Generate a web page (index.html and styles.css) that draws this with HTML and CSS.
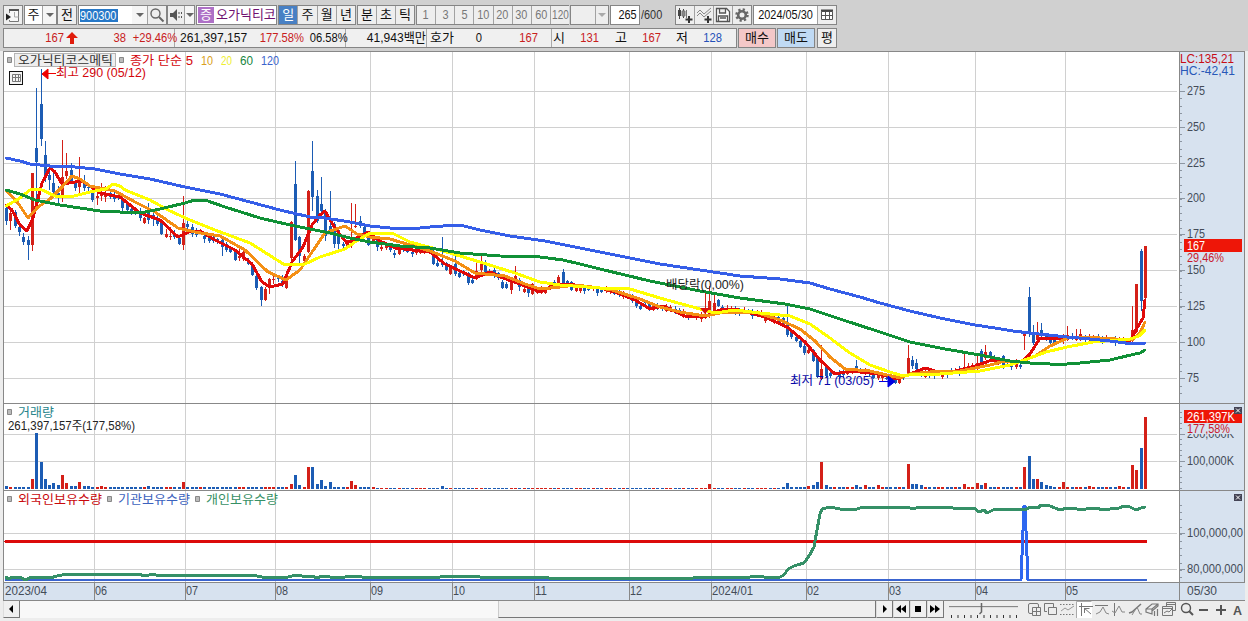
FILE: index.html
```html
<!DOCTYPE html>
<html lang="ko">
<head>
<meta charset="utf-8">
<title>오가닉티코스메틱 차트</title>
<link rel="stylesheet" href="styles.css">
</head>
<body>
<div class="app">
  <header class="toolbar">
    <div class="group" style="width:20px"><button class="cell"><svg width="18" height="18"><path d="M5.500 7v-3.500h9v12h-9v-1.500" fill="#f8f8f8" stroke="#777"/><path d="M5 4h10" stroke="#555" stroke-width="2"/><path d="M2 7.500v7l5-3.500z" fill="#222"/><path d="M10.500 6v5h4" stroke="#aaa" fill="none"/></svg></button></div>
    <div class="group m1" style="width:33px"><span class="cell white" style="width:17px">주</span><span class="cell arrow light"></span></div>
    <div class="group" style="width:20px"><button class="cell">전</button></div>
    <div class="group m1 white" style="width:89px"><span class="cell code" style="width:53px"><mark><i class="n">900300</i></mark></span><span class="cell arrow light nb" style="width:15px"></span><span class="cell"><svg width="18" height="18"><circle cx="7.500" cy="7.500" r="4.500" fill="#eee" stroke="#666" stroke-width="1.400"/><path d="M11 11l4.500 4.500" stroke="#666" stroke-width="2"/></svg></span></div>
    <div class="group" style="width:28px"><span class="cell" style="width:16px"><svg width="16" height="18"><path d="M2 7h3l4-4v12l-4-4h-3z" fill="#555"/><path d="M11 6v7M13.500 6v7" stroke="#555" stroke-dasharray="2 2"/></svg></span><span class="cell arrow light"></span></div>
    <div class="group m1 name white" style="width:81px"><b>증</b><span>오가닉티코</span></div>
    <div class="group m1" style="width:78px"><span class="cell on">일</span><span class="cell">주</span><span class="cell">월</span><span class="cell">년</span></div>
    <div class="group m1" style="width:58px"><span class="cell">분</span><span class="cell">초</span><span class="cell">틱</span></div>
    <div class="group m1 dim" style="width:153px"><span class="cell"><i class="n">1</i></span><span class="cell"><i class="n">3</i></span><span class="cell"><i class="n">5</i></span><span class="cell"><i class="n">10</i></span><span class="cell"><i class="n">20</i></span><span class="cell"><i class="n">30</i></span><span class="cell"><i class="n">60</i></span><span class="cell last"><i class="n">120</i></span></div>
    <div class="group m1" style="width:39px"><span class="cell" style="width:24px"></span><span class="cell arrow pale"></span></div>
    <div class="group m1" style="width:30px"><span class="cell white right"><i class="n r">265</i></span></div>
    <span class="total"><i class="n l">/600</i></span>
    <div class="group" style="width:77px">
      <span class="cell"><svg width="18" height="18"><path d="M3.500 2v11M7.500 3v9" stroke="#444"/><path d="M2 4h3v6h-3z" fill="#444"/><path d="M6 5h3v5h-3zM10.500 4v8" fill="#888" stroke="#777"/><path d="M13 10v7M9.500 13.500h7" stroke="#333" stroke-width="2"/></svg></span>
      <span class="cell"><svg width="18" height="18"><path d="M2 7l3-3 4 4 7-6M2 10l3-3 4 4 7-6" fill="none" stroke="#888"/><path d="M13 10v7M9.500 13.500h7" stroke="#333" stroke-width="2"/></svg></span>
      <span class="cell"><svg width="18" height="18"><path d="M2.500 2.500h10l3 3v10h-13zM5.500 3v4h6v-4M4.500 15v-5h9v5M6 12h6" fill="#fff" stroke="#555" stroke-width="1.300"/></svg></span>
      <span class="cell"><svg width="18" height="18"><circle cx="9" cy="9" r="5.500" fill="none" stroke="#666" stroke-width="2.500" stroke-dasharray="2.160 2.160"/><circle cx="9" cy="9" r="3.800" fill="none" stroke="#666" stroke-width="2.600"/></svg></span>
    </div>
    <div class="group m1" style="width:84px"><span class="cell white date" style="width:63px"><i class="n">2024/05/30</i></span><span class="cell"><svg width="18" height="18"><path d="M3.500 5.500h11v8h-11zM3.500 9.500h11M7.500 5v9M11.500 5v9" fill="#fff" stroke="#555"/><path d="M3 4.500h12" stroke="#444" stroke-width="2"/></svg></span></div>
  </header>

  <section class="quote">
    <div class="strip">
      <span class="up" style="width:60px">167</span>
      <svg width="16" height="18"><path d="M8 3l6 6h-4v6h-4v-6h-4z" fill="#e01c0c"/></svg>
      <span class="up" style="width:46px">38</span>
      <span class="up" style="width:48px">+29.46%</span><hr>
      <span class="wide" style="width:71px">261,397,157</span>
      <span class="up" style="width:58px">177.58%</span>
      <span style="width:41px">06.58%</span><hr>
      <span class="wide" style="width:80px">41,943백만</span><hr>
      <span class="ko left" style="width:27px">호가</span>
      <span style="width:28px">0</span>
      <span class="up" style="width:56px">167</span><i class="space"></i><hr>
      <span class="ko" style="width:13px">시</span>
      <span class="up" style="width:34px">131</span>
      <span class="ko" style="width:28px">고</span>
      <span class="up" style="width:34px">167</span>
      <span class="ko" style="width:27px">저</span>
      <span class="down" style="width:34px">128</span>
    </div>
    <button class="order buy">매수</button>
    <button class="order sell">매도</button>
    <button class="order avg">평</button>
  </section>

  <main class="chart">
    <svg class="panel" id="price" width="1241" height="352" viewBox="4 52 1241 352">
      <rect class="axis" x="1179" y="52" width="65" height="352"/>
      <g id="priceGrid"></g>
      <g id="candles"></g>
      <g class="ma">
        <polyline stroke="#e00a0a" points="6,205 12,210 20,225 27,231 33,218 42,183 50,168 55,172 62,184 75,182 80,180 90,186 100,193 120,197 140,213 160,220 178,237 189,232 200,231 215,240 235,250 252,264 262,282 270,287 283,284 292,262 303,247 312,225 320,215 325,211 335,228 347,243 360,236 368,232 380,241 395,248 430,252 445,264 475,278 490,272 503,278 520,284 540,292 555,285 567,284 600,288 615,292 635,300 650,309 663,306 685,316 705,317 722,309 735,309 765,317 787,327 805,342 820,360 835,374 850,371 880,374 897,379 910,374 925,368 935,371 955,371 975,366 992,360 1005,361 1022,362 1030,354 1040,338 1060,338 1090,337 1110,341 1130,341 1137,328 1143,318 1145,300"/>
        <polyline stroke="#f48f14" points="6,190 18,203 28,218 38,207 50,199 62,187 72,176 80,179 90,186 115,191 135,202 155,212 178,228 195,232 220,236 245,250 268,272 286,280 300,270 310,255 325,233 345,226 357,234 370,237 390,239 430,251 455,261 475,273 505,276 525,284 540,289 560,287 575,285 600,288 612,290 640,299 660,307 680,312 705,316 720,313 755,312 780,320 800,329 815,341 830,357 845,369 870,371 900,378 910,374 930,372 960,371 990,365 1005,361 1020,362 1035,356 1050,346 1070,337 1100,338 1132,340 1140,333 1145,322"/>
        <polyline stroke="#ffff00" points="6,206 20,198 30,190 40,189 55,196 70,197 90,192 106,189 113,184 120,186 125,190 150,200 170,211 190,220 215,230 250,243 285,265 305,264 320,257 345,249 355,242 370,233 392,233 410,242 440,250 480,262 515,273 540,282 560,285 600,288 630,289 660,298 700,309 715,313 735,310 760,313 790,316 810,324 830,338 850,353 870,365 890,372 903,376 915,374 940,374 980,371 1010,365 1030,358 1046,352 1067,347 1093,342 1130,339 1139,336 1145,330"/>
        <polyline stroke="#109036" points="6,190 20,194 35,200 60,205 100,211 140,213 160,209 185,203 195,200 205,200 225,207 260,218 290,225 315,230 330,233 350,238 370,242 400,246 430,248 460,253 500,256 540,257 563,260 580,264 600,269 650,281 700,291 740,298 785,304 810,309 840,319 880,332 910,342 945,349 980,355 1010,361 1030,363 1060,364.500 1080,363 1110,360 1135,354 1140,353 1145,350"/>
        <polyline stroke="#355ee8" points="6,158 20,161 30,164 50,166 75,167 95,169 120,174 150,179 185,187 220,194 250,202 280,210 310,217 325,218 350,222 370,226 390,228 420,228 435,226.500 460,225 480,230 510,236 545,241 580,248 615,255 640,260 660,264 700,270 740,276 780,279 810,283 830,289 860,297 880,303 910,311 940,318 975,325 995,328 1013,331 1030,333 1067,337 1090,339 1110,341 1133,344 1145,343"/>
      </g>
      <path class="frame" d="M4 403.500h1241"/>
      <path class="chip" d="M7.500 57.500h4v5h-4zM119.500 57.500h4v5h-4z"/>
      <rect x="14.500" y="53.500" width="101" height="13" fill="#eee" stroke="#b5b5b5"/>
      <text x="18" y="65" fill="#333" textLength="95" lengthAdjust="spacingAndGlyphs">오가닉티코스메틱</text>
      <text x="130" y="65" fill="#d3060c" textLength="63" lengthAdjust="spacingAndGlyphs">종가 단순 5</text>
      <text x="201" y="65" fill="#d9a020" textLength="12" lengthAdjust="spacingAndGlyphs">10</text>
      <text x="221" y="65" fill="#eeee30" textLength="11" lengthAdjust="spacingAndGlyphs">20</text>
      <text x="240" y="65" fill="#168640" textLength="13" lengthAdjust="spacingAndGlyphs">60</text>
      <text x="261" y="65" fill="#3b64cc" textLength="18" lengthAdjust="spacingAndGlyphs">120</text>
      <path d="M42 74l6-5v10zM48 73.500h8" fill="#f00000" stroke="#f00000"/>
      <text x="56" y="77" fill="#d3060c" textLength="90" lengthAdjust="spacingAndGlyphs">최고 290 (05/12)</text>
      <rect x="9.500" y="71.500" width="13" height="13" fill="#f4f4f4" stroke="#111"/>
      <path d="M12.500 74.500h8v7h-8zM12.500 77.500h8M15.500 74v8M18.500 74v8" fill="none" stroke="#777"/>
      <path d="M700 308h10l-5 6z" fill="#d8110c"/>
      <text x="666" y="289" fill="#222" textLength="78" lengthAdjust="spacingAndGlyphs">배당락(0,00%)</text>
      <text x="790" y="385" fill="#0808a8" textLength="84" lengthAdjust="spacingAndGlyphs">최저 71 (03/05)</text>
      <path d="M879 381.500h9M888 376v11l7-5.500z" fill="#0000e0" stroke="#0000e0"/>
      <text x="1180" y="63" fill="#c80c14" textLength="54" lengthAdjust="spacingAndGlyphs">LC:135,21</text>
      <text x="1180" y="75" fill="#2858b8" textLength="55" lengthAdjust="spacingAndGlyphs">HC:-42,41</text>
      <rect x="1184" y="239" width="58" height="13" fill="#ee1608"/>
      <text x="1187" y="250" fill="#fff" textLength="18" lengthAdjust="spacingAndGlyphs">167</text>
      <text x="1187" y="262" fill="#c8182c" textLength="37" lengthAdjust="spacingAndGlyphs">29,46%</text>
    </svg>
    <svg class="panel" id="volume" width="1241" height="87" viewBox="4 404 1241 87">
      <rect class="axis" x="1179" y="404" width="65" height="87"/>
      <g id="volumeGrid"></g>
      <g id="volumeBars"></g>
      <path class="frame" d="M4 490.500h1241"/>
      <path class="chip" d="M7.500 409.500h4v5h-4z"/>
      <text x="18" y="417" fill="#28858c" textLength="36" lengthAdjust="spacingAndGlyphs">거래량</text>
      <text x="8" y="430" fill="#222" textLength="127" lengthAdjust="spacingAndGlyphs">261,397,157주(177,58%)</text>
      <rect class="axis" x="1186" y="422" width="57" height="12"/>
      <rect x="1184" y="410" width="58" height="13" fill="#ee1608"/>
      <text x="1187" y="421" fill="#fff" textLength="48" lengthAdjust="spacingAndGlyphs">261,397K</text>
      <text x="1187" y="433" fill="#c8182c" textLength="43" lengthAdjust="spacingAndGlyphs">177,58%</text>
      <path d="M1234 407h8v7h-8z" fill="#445"/><path d="M1236 408.500l4 4M1240 408.500l-4 4" stroke="#fff"/>
    </svg>
    <svg class="panel" id="holding" width="1241" height="92" viewBox="4 491 1241 92">
      <rect class="axis" x="1179" y="491" width="65" height="92"/>
      <g id="holdingGrid"></g>
      <g class="ma">
        <path stroke="#dc0a0a" d="M6 541.500H1146"/>
        <path stroke="#3a64d0" stroke-width="2" d="M6 580H1021"/>
        <path stroke="#3a64d0" stroke-width="2" d="M1028 580H1146"/>
        <polyline stroke="#2e67f0" points="1021,580 1024,506 1025,506 1028,580"/>
        <polyline stroke="#359067" points="6,577 8,579 13,577 20,577 25,580 32,577 40,577 50,578 57,576 65,574.500 140,574.500 144,576 152,574.500 160,575.500 255,575.500 262,577 272,578 288,577 294,575.500 302,576 312,576 317,578 322,576 330,577 345,577 350,576.500 362,577 440,577 446,576.500 474,576.500 480,577 542,577 552,578.500 690,578.500 700,577 750,577 758,576 764,577 780,577 784,575 788,569 794,566 804,563 809,556 814,547 817,530 820,514 822,509 828,507.500 835,508 840,509 857,509 863,507 905,507 912,508.500 920,507.500 950,507.500 958,509 974,508 979,512 984,510 987,513 993,510 1005,509 1024,510 1031,507 1038,508 1041,505 1050,506 1060,510 1067,508 1082,509.500 1094,508 1102,509.500 1118,508.500 1124,506 1130,507 1136,510 1141,508 1145,507"/>
      </g>
      <path class="frame" d="M4 582.500h1241"/>
      <path class="chip" d="M7.500 496.500h4v5h-4zM107.500 496.500h4v5h-4zM195.500 496.500h4v5h-4z"/>
      <text x="18" y="504" fill="#c8080c" textLength="84" lengthAdjust="spacingAndGlyphs">외국인보유수량</text>
      <text x="118" y="504" fill="#3c62bd" textLength="72" lengthAdjust="spacingAndGlyphs">기관보유수량</text>
      <text x="206" y="504" fill="#379065" textLength="72" lengthAdjust="spacingAndGlyphs">개인보유수량</text>
      <path d="M1234 494h8v7h-8z" fill="#445"/><path d="M1236 495.500l4 4M1240 495.500l-4 4" stroke="#fff"/>
    </svg>
    <svg class="panel" width="1241" height="18" viewBox="4 583 1241 18">
      <rect class="axis" x="4" y="583" width="1241" height="18"/>
      <g id="months"></g>
      <path class="frame" d="M4 600.500h1241"/>
      <text x="1187" y="595" fill="#444c58" textLength="30" lengthAdjust="spacingAndGlyphs">05/30</text>
    </svg>
  </main>

  <footer class="bottom">
    <button class="sb left-end"><svg width="14" height="14"><path d="M9 3v8l-4-4z"/></svg></button>
    <div class="track"><div class="thumb"></div></div>
    <button class="sb"><svg width="14" height="14"><path d="M6 3v8l4-4z"/></svg></button>
    <button class="sb"><svg width="14" height="14"><path d="M7 3v8l-5-4zM12 3v8l-5-4z"/></svg></button>
    <button class="sb"><svg width="14" height="14"><path d="M4 4h6v6h-6z"/></svg></button>
    <button class="sb"><svg width="14" height="14"><path d="M2 3v8l5-4zM7 3v8l5-4z"/></svg></button>
    <svg class="slider" width="76" height="17"><path d="M5 5.500h69" stroke="#888"/><path d="M5 6.500h69" stroke="#ddd"/><path d="M37.500 2v9l-2 2" fill="none" stroke="#666" stroke-width="1.500"/><path d="M7.500 14v3M14 14v3M20.500 14v3M27 14v3M33.500 14v3M40 14v3M46.500 14v3M53 14v3M59.500 14v3M66 14v3M72.500 14v3" stroke="#333"/></svg>
    <svg class="tools" width="226" height="18" viewBox="1020 601 226 18" fill="none" stroke="#777">
      <path d="M1031 613.500h-2q-1.500 0-1.500-1.500v-7q0-1.500 1.500-1.500h7q1.500 0 1.500 1.500v2M1031.500 607.500h8v8h-8zM1032 611.500h7M1035.500 608v7"/>
      <path d="M1046 611.500h-2.500v-8h9v4M1047.500 607.500h8v7h-8z"/>
      <path d="M1059 604.500h14M1059 614.500h14" stroke-dasharray="1.500 1.500"/><path d="M1060 611l4-3 3 2 6-4" stroke="#999"/>
      <path d="M1076 618v-17h15v17z" fill="#fff" stroke="none"/><path d="M1075.500 618v-16.500h15" stroke="#aaa"/><path d="M1080.500 603v13M1078 606.500h14M1083 608l7 6M1083.500 613v-4.500h5"/>
      <path d="M1094 605.500h13"/><path d="M1095 614l4-2 3-5 3 6 3 1" stroke="#888"/>
      <path d="M1113.500 603v13"/><path d="M1111 611l3 2 4-7 3 6 3 0" stroke="#888"/>
      <path d="M1128 613l3-1 9-8" stroke-width="1.500"/><path d="M1131 615l5-8 3 7 2 0" stroke="#888"/>
      <path d="M1145 612v-3l6-5 6 0v2l-6 5v3zM1145 609h6l6-5M1151 609v3M1153.500 611v5M1156.500 609v7" stroke-width="1.200"/>
      <path d="M1165.500 606v-3.500h9v8h-3M1165.500 604.500h9M1161.500 606.500h10v9h-10zM1161.500 608.500h10M1163 613l3-2 2 1 3-3"/>
      <circle cx="1185" cy="608" r="4.500" stroke="#555" stroke-width="1.400"/><path d="M1188 611l4 4" stroke="#555" stroke-width="2"/>
      <path d="M1198 610h9M1215 610h10M1220 605v10" stroke="#555" stroke-width="2"/>
      <text x="1232" y="615" fill="#555" stroke="none" font-weight="bold">A</text>
    </svg>
  </footer>
</div>
<script src="chart.js"></script>
</body>
</html>
```

FILE: styles.css
```css
* { box-sizing: border-box; }
body {
  margin: 0;
  background: #ededed;
  font: 12px/18px "Liberation Sans", "Noto Sans CJK KR", sans-serif;
  color: #111;
}
.app { width: 1248px; height: 621px; overflow: hidden; }
button { font: inherit; padding: 0; margin: 0; border: 0; border-radius: 0; color: inherit; }
svg { display: block; flex: none; }
text { font-family: "Liberation Sans", "Noto Sans CJK KR", sans-serif; font-size: 12.5px; }

.toolbar { display: flex; height: 28px; padding: 5px 0 3px 3px; background: #d0d0d0; }
.group { display: flex; height: 20px; border: 1px solid #858585; background: #eee; flex: none; }
.m1 { margin-left: 1px; }
.cell {
  flex: 1 1 0; min-width: 0; height: 18px; border-left: 1px solid #a2a2a2; background: #eee;
  display: flex; align-items: center; justify-content: center; font-size: 13px;
}
.cell:first-child { border-left: 0; }
.cell[style] { flex: none; }
.cell.nb { border-left: 0; }
.white, .cell.white { background: #fff; }
.right { justify-content: flex-end; padding-right: 2px; }
.n { display: block; flex: none; font-style: normal; transform: scaleX(.84); }
.n.r { transform-origin: right; }
.n.l { transform-origin: left; }
.last { margin-right: -1px; }
.last .n { font-size: 12.5px; transform: scaleX(.8); }
.dim .cell { color: #777; }
.cell.on { background: #4880c4; color: #fff; }
.code { background: #fff; justify-content: flex-start; padding-left: 1px; }
.code mark { background: #2678c8; color: #fff; line-height: 13px; width: 38px; }
.code .n { transform-origin: left; }
.arrow::after { content: ""; border: 4px solid transparent; border-top: 4px solid #666; border-bottom: 0; }
.arrow.light { background: #f5f5f5; }
.arrow.pale::after { border-top-color: #aaa; }
.name { align-items: center; color: #701070; overflow: hidden; white-space: nowrap; font-size: 13px; }
.name b { width: 16px; height: 16px; margin: 0 2px 0 1px; background: #ae70c6; color: #fff; font-weight: normal; line-height: 15px; text-align: center; flex: none; }
.total { width: 35px; padding-left: 1px; font-size: 13px; line-height: 20px; color: #333; }
.date { white-space: nowrap; }

.quote { display: flex; height: 23px; padding: 0 0 3px 3px; background: #d0d0d0; }
.strip { display: flex; width: 734px; height: 20px; border: 1px solid #858585; background: #f0f0f0; font-size: 13px; white-space: nowrap; }
.strip span { flex: none; height: 18px; text-align: right; direction: ltr; transform: scaleX(.86); transform-origin: right; }
.strip .wide { transform: scaleX(.93); }
.strip .ko { transform: none; }
.strip .left { text-align: left; padding-left: 3px; }
.strip hr { flex: none; width: 1px; height: 18px; margin: 0; border: 0; background: #aaa; }
.space { width: 13px; flex: none; }
.up { color: #c8201c; }
.down { color: #2450b8; }
.order { height: 20px; width: 38px; margin-left: 1px; border: 1px solid #858585; font-size: 13px; line-height: 18px; }
.buy { background: #f4c8c8; }
.sell { background: #c0daf4; }
.avg { width: 20px; margin-left: 2px; background: #eee; }

.chart { width: 1242px; margin-left: 3px; border: 1px solid #888; border-bottom: 0; background: #fff; }
.axis { fill: #d7e2ef; }
.frame { stroke: #888; fill: none; }
.grid { stroke: #d0d0d0; fill: none; }
.tick { stroke: #8c96a2; fill: none; }
.scale { fill: #444c58; }
.chip { fill: #bbb; stroke: #888; }
.ma { fill: none; stroke-width: 3; stroke-linejoin: round; stroke-linecap: round; shape-rendering: crispEdges; }

.bottom { display: flex; align-items: flex-start; height: 20px; padding-left: 3px; background: #ededed; }
.sb { width: 17px; height: 17px; background: #f0f0f0; border-right: 1px solid #777; border-bottom: 1px solid #777; border-left: 1px solid #ddd; }
.track { width: 856px; height: 17px; padding-left: 478px; background: #f8f8f8; }
.thumb { height: 17px; background: #efefef; border-left: 1px solid #ccc; border-bottom: 1px solid #777; border-right: 1px solid #777; }
.slider { margin-right: 1px; }
```

FILE: chart.js
```js
const NS = 'http://www.w3.org/2000/svg';
const UP = '#d42018', DOWN = '#1c5cb4';
const STEP = 1139 / 264;
const barX = i => Math.round(6 + i * STEP);

function add(parent, tag, attrs, text) {
  const node = document.createElementNS(NS, tag);
  for (const k in attrs) node.setAttribute(k, attrs[k]);
  if (tag === 'text') node.setAttribute('lengthAdjust', 'spacingAndGlyphs');
  if (text) node.textContent = text;
  document.getElementById(parent).appendChild(node);
}

const months = [[94, '06'], [185, '07'], [275, '08'], [370, '09'], [452, '10'], [534, '11'],
  [629, '12'], [711, '2024/01'], [806, '02'], [888, '03'], [975, '04'], [1065, '05']];

function grid(id, top, bottom, rows) {
  for (const [x] of months) add(id, 'path', { class: 'grid', d: `M${x}.5 ${top}V${bottom}` });
  for (const y of rows) add(id, 'path', { class: 'grid', d: `M4 ${y}.5H1177` });
  add(id, 'path', { class: 'frame', d: `M1179.500 ${top}V${bottom}` });
}
function ticks(id, from, to, step, major) {
  for (let y = from; y <= to; y += step) add(id, 'path', { class: 'tick', d: `M1180 ${Math.round(y)}.5h2` });
  for (const [y, label, width] of major) {
    add(id, 'path', { class: 'tick', d: `M1180 ${y}.5h5` });
    add(id, 'text', { class: 'scale', x: 1187, y: y + 4, textLength: width }, label);
  }
}

const prices = [[91, '275'], [127, '250'], [163, '225'], [198, '200'], [234, '175'], [270, '150'], [306, '125'], [342, '100'], [378, '75']];
grid('priceGrid', 52, 404, prices.map(p => p[0]));
ticks('priceGrid', 84, 398, 7.18, prices.map(([y, t]) => [y, t, t.length * 6]));
grid('volumeGrid', 404, 491, [434, 461]);
ticks('volumeGrid', 412, 489, 5.4, [[434, '200,000K', 47], [461, '100,000K', 47]]);
grid('holdingGrid', 491, 583, [533, 569]);
ticks('holdingGrid', 505, 580, 7.2, [[533, '100,000,00', 56], [569, '80,000,000', 56]]);
for (const [x, label] of months) {
  add('months', 'path', { class: 'frame', d: `M${x}.5 583v18` });
  add('months', 'text', { class: 'scale', x: x + 1, y: 595, textLength: label.length > 2 ? 41 : 12 }, label);
}
add('months', 'text', { class: 'scale', x: 5, y: 595, textLength: 42 }, '2023/04');
add('months', 'path', { class: 'frame', d: 'M1179.500 583v18' });

/* index, direction, body top, body bottom, wick top, wick bottom */
const detail = `0 b 208 221 206 225,1 r 213 221 211 230,2 b 212 226 210 228,3 b 227 232 222 236,4 b 237 242 233 245,5 b 240 245 236 260,
6 r 173 245 173 251,7 b 148 162 88 198,8 b 104 139 69 146,9 b 155 178 141 182,10 b 175 180 165 190,11 b 183 192 173 197,12 b 193 196 186 203,
13 r 177 196 140 202,14 r 171 176 153 179,15 b 170 181 163 184,16 b 183 188 180 191,17 r 181 187 157 195,18 b 184 188 175 191,19 b 187 188 184 192,
20 b 191 200 189 202,21 r 196 198 190 205,22 r 194 196 183 201,23 r 195 197 186 202,24 b 193 197 191 199,25 b 196 199 192 202,26 b 195 198 193 200,
27 b 199 208 197 211,28 b 204 210 203 214,29 b 209 213 206 215,30 b 211 214 209 215,31 b 212 218 208 221,32 r 218 223 217 224,33 b 213 220 203 224,
34 b 215 218 213 226,35 b 218 224 216 226,36 b 222 234 220 235,37 r 234 237 229 238,38 r 236 237 227 240,39 b 234 237 230 239,40 b 238 244 236 245,
41 r 223 245 196 250,42 b 224 227 220 232,43 b 227 234 224 237,44 b 230 235 228 237,45 r 230 232 229 234,46 b 236 239 232 243,47 b 238 241 235 243,
48 b 237 241 235 243,49 b 239 242 238 244,50 b 240 247 238 256,51 b 244 250 242 252,52 b 248 252 246 253,53 b 252 260 250 261,54 r 256 258 247 261,
55 r 252 259 249 261,56 b 260 264 258 265,57 b 264 275 262 276,58 b 276 288 273 290,59 b 287 300 286 306,60 r 289 300 287 301,61 r 279 288 278 294,
62 r 279 280 276 284,63 b 276 279 275 282,64 b 281 285 275 287,65 r 281 288 280 289,66 r 222 258 221 260,67 b 184 240 161 241,68 b 237 256 236 265,
69 r 256 261 254 263,70 r 191 252 190 253,71 b 171 197 141 211,72 b 196 221 190 223,73 b 204 211 177 214,74 b 211 236 209 241,75 b 226 231 191 235,
76 b 224 244 222 248,77 b 230 244 228 250,78 b 244 246 242 250,79 r 242 247 240 249,80 r 242 244 203 248,81 r 226 227 204 228,82 b 221 226 216 228,
83 b 227 235 225 236,84 b 233 245 231 246,85 r 235 241 233 243,86 b 239 247 237 251,87 r 247 249 244 251,88 r 246 248 244 250,89 b 245 250 243 252,
90 b 253 255 250 258,91 r 247 254 246 255,92 b 248 250 246 252,93 b 249 252 247 253,94 b 252 254 249 257,95 r 251 253 249 255,96 r 251 253 249 254,
97 r 249 253 244 254,98 b 249 251 246 254,99 b 251 264 250 265,100 b 263 266 260 267,101 b 261 265 237 267,102 b 263 270 262 271,103 r 268 274 266 275,
104 b 264 274 253 276,105 b 273 277 271 278,106 b 272 274 270 276,107 b 273 283 272 285,108 b 280 283 277 284,109 r 271 278 263 280,110 r 263 270 254 273,
111 b 263 274 260 276,112 b 271 274 269 275,113 b 270 276 268 278,114 b 273 278 272 280,115 b 282 288 280 289,116 b 284 288 282 289,117 r 282 290 280 294,
118 r 276 281 266 284,119 b 280 287 278 291,120 r 289 292 286 293,121 b 289 293 284 297,122 r 284 294 283 295,123 r 290 293 289 294,124 r 288 293 286 294,
125 r 290 293 289 294,126 r 284 288 283 290,127 b 282 286 280 288,128 r 277 285 275 286,129 b 272 284 269 285,130 b 281 284 280 286,131 b 282 290 281 291,
132 r 287 291 285 292,146 b 299 306 298 308,147 b 306 309 305 310,150 r 306 310 304 311,162 r 316 318 293 319,163 r 301 316 286 318,164 r 303 312 292 314,
165 b 300 306 299 307,176 r 318 321 316 323,178 r 317 322 315 324,179 b 317 322 316 325,180 b 318 326 315 327,181 b 325 335 303 337,182 b 332 337 330 339,
183 b 337 341 335 342,184 b 341 347 338 348,185 b 346 353 344 355,186 r 350 353 348 354,187 b 350 361 349 362,188 b 358 377 356 378,189 r 369 379 345 380,
190 b 366 376 364 378,191 b 373 376 371 378,197 b 366 370 360 371,205 b 375 380 373 381,206 b 377 383 376 384,207 r 378 383 377 384,209 r 358 374 345 376,
210 b 360 366 356 369,211 b 363 369 359 373,212 b 370 374 368 377,222 r 368 371 352 373,225 r 363 367 353 370,226 b 351 363 349 365,227 r 352 358 345 360,
228 b 352 356 351 360,229 b 357 362 355 364,231 b 356 367 355 369,234 r 362 367 359 369,236 r 334 336 333 350,237 b 297 334 287 337,238 b 333 343 325 345,
239 r 333 340 322 342,240 b 330 336 323 338,241 b 335 339 334 341,242 b 338 343 336 344,243 b 337 344 335 345,246 r 335 340 326 341,248 r 337 340 329 341,
249 r 334 339 329 341,261 r 330 341 306 342,262 r 284 332 284 333,263 b 251 301 249 311,264 r 246 298 246 301`;
const candles = {};
for (const row of detail.split(',')) {
  const [i, dir, ...y] = row.trim().split(' ');
  candles[i] = [dir, ...y.map(Number)];
}
/* closing level for the quiet sessions */
const quiet = [[132, 288], [141, 291], [150, 307], [154, 308], [160, 318], [166, 308], [175, 314], [180, 322], [190, 375], [198, 371], [206, 381],
  [212, 373], [216, 375], [220, 371], [224, 366], [230, 360], [235, 366], [237, 337], [243, 341], [246, 337], [252, 338], [260, 341], [264, 341]];
function level(i) {
  for (let k = 1; k < quiet.length; k++) {
    const [a, ya] = quiet[k - 1], [b, yb] = quiet[k];
    if (i <= b) return ya + (yb - ya) * (i - a) / (b - a);
  }
}
for (let i = 0; i < 265; i++) {
  let c = candles[i];
  if (!c) {
    const y = Math.round(level(i)), h = 1 + i * 7 % 4;
    c = [i * 5 % 7 < 3 ? 'r' : 'b', y - 1, y - 1 + h, y - 3 - i % 2, y + h + i % 3];
  }
  const fill = c[0] === 'r' ? UP : DOWN, x = barX(i);
  add('candles', 'rect', { x, y: c[3], width: 1, height: c[4] - c[3], fill });
  add('candles', 'rect', { x: x - 1, y: c[1], width: 3, height: c[2] - c[1], fill });
}

const volumeTop = { 0: 486, 6: 479, 7: 433, 8: 462, 9: 479, 10: 485, 11: 483, 12: 485, 13: 475, 14: 483, 15: 486, 16: 486, 17: 482, 18: 486, 19: 486, 22: 486,
  33: 486, 41: 482, 66: 484, 67: 475, 68: 485, 70: 467, 71: 467, 72: 484, 73: 480, 74: 486, 75: 482, 80: 481, 81: 485, 101: 486, 163: 484, 181: 483,
  186: 486, 187: 485, 188: 482, 189: 462, 190: 485, 197: 485, 199: 485, 202: 485, 209: 464, 210: 484, 211: 484, 212: 485, 222: 484, 225: 483, 226: 485,
  227: 483, 236: 467, 237: 456, 238: 479, 239: 479, 240: 482, 241: 485, 242: 486, 245: 482, 251: 486, 258: 486, 261: 465, 262: 470, 263: 448, 264: 417 };
for (let i = 0; i < 265; i++) {
  const c = candles[i];
  const red = c ? c[0] === 'r' : i * 5 % 7 < 3;
  const calm = i > 85 && i < 180;
  const y = volumeTop[i] || (calm ? 488 : 487);
  add('volumeBars', 'rect', { x: barX(i) - 1, y, width: 3, height: 489 - y, fill: red ? UP : DOWN });
}
```
